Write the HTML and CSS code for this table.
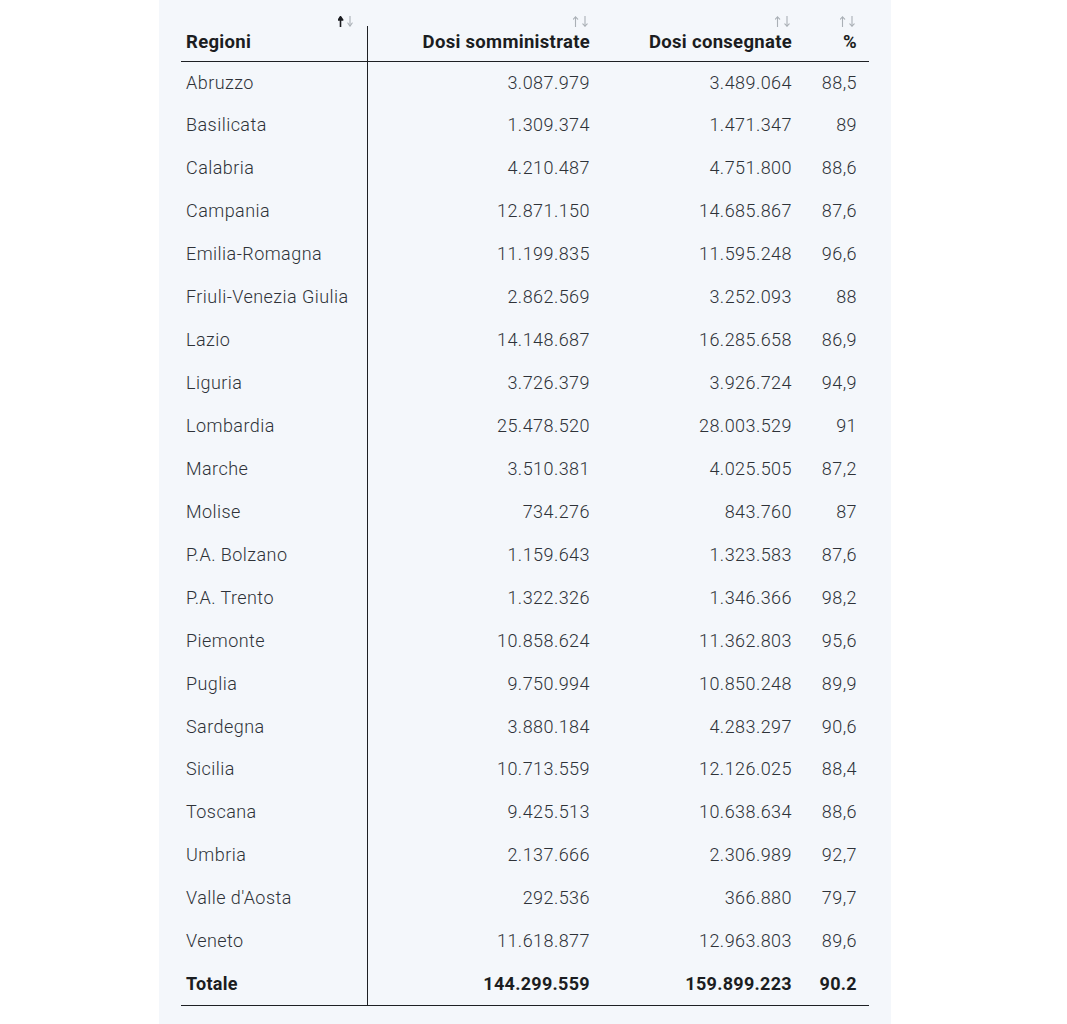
FILE: index.html
```html
<!DOCTYPE html>
<html lang="it">
<head>
<meta charset="utf-8">
<title>Dosi per regione</title>
<link rel="stylesheet" href="styles.css">
</head>
<body>
<div class="panel">
  <table class="doses">
    <thead>
      <tr>
        <th class="col-region"><svg class="sort asc" viewBox="0 0 15 11" width="15" height="11" aria-hidden="true"><g class="up"><path d="M2.5 1.5 V11"/><path class="head" d="M0.3 4 L2.5 0.6 L4.7 4 Z"/></g><g class="down"><path d="M12 0 V9.5"/><path d="M9.8 7 L12 10.2 L14.2 7"/></g></svg>Regioni</th>
        <th class="num col-adm"><svg class="sort" viewBox="0 0 15 11" width="15" height="11" aria-hidden="true"><g class="up"><path d="M2.5 1 V11"/><path d="M0.3 3.2 L2.5 0.8 L4.7 3.2"/></g><g class="down"><path d="M12 0 V10"/><path d="M9.8 7.8 L12 10.2 L14.2 7.8"/></g></svg>Dosi somministrate</th>
        <th class="num col-del"><svg class="sort" viewBox="0 0 15 11" width="15" height="11" aria-hidden="true"><g class="up"><path d="M2.5 1 V11"/><path d="M0.3 3.2 L2.5 0.8 L4.7 3.2"/></g><g class="down"><path d="M12 0 V10"/><path d="M9.8 7.8 L12 10.2 L14.2 7.8"/></g></svg>Dosi consegnate</th>
        <th class="num col-pct"><svg class="sort" viewBox="0 0 15 11" width="15" height="11" aria-hidden="true"><g class="up"><path d="M2.5 1 V11"/><path d="M0.3 3.2 L2.5 0.8 L4.7 3.2"/></g><g class="down"><path d="M12 0 V10"/><path d="M9.8 7.8 L12 10.2 L14.2 7.8"/></g></svg>%</th>
      </tr>
    </thead>
    <tbody>
      <tr><td class="col-region">Abruzzo</td><td class="num">3.087.979</td><td class="num">3.489.064</td><td class="num">88,5</td></tr>
      <tr><td class="col-region">Basilicata</td><td class="num">1.309.374</td><td class="num">1.471.347</td><td class="num">89</td></tr>
      <tr><td class="col-region">Calabria</td><td class="num">4.210.487</td><td class="num">4.751.800</td><td class="num">88,6</td></tr>
      <tr><td class="col-region">Campania</td><td class="num">12.871.150</td><td class="num">14.685.867</td><td class="num">87,6</td></tr>
      <tr><td class="col-region">Emilia-Romagna</td><td class="num">11.199.835</td><td class="num">11.595.248</td><td class="num">96,6</td></tr>
      <tr><td class="col-region">Friuli-Venezia Giulia</td><td class="num">2.862.569</td><td class="num">3.252.093</td><td class="num">88</td></tr>
      <tr><td class="col-region">Lazio</td><td class="num">14.148.687</td><td class="num">16.285.658</td><td class="num">86,9</td></tr>
      <tr><td class="col-region">Liguria</td><td class="num">3.726.379</td><td class="num">3.926.724</td><td class="num">94,9</td></tr>
      <tr><td class="col-region">Lombardia</td><td class="num">25.478.520</td><td class="num">28.003.529</td><td class="num">91</td></tr>
      <tr><td class="col-region">Marche</td><td class="num">3.510.381</td><td class="num">4.025.505</td><td class="num">87,2</td></tr>
      <tr><td class="col-region">Molise</td><td class="num">734.276</td><td class="num">843.760</td><td class="num">87</td></tr>
      <tr><td class="col-region">P.A. Bolzano</td><td class="num">1.159.643</td><td class="num">1.323.583</td><td class="num">87,6</td></tr>
      <tr><td class="col-region">P.A. Trento</td><td class="num">1.322.326</td><td class="num">1.346.366</td><td class="num">98,2</td></tr>
      <tr><td class="col-region">Piemonte</td><td class="num">10.858.624</td><td class="num">11.362.803</td><td class="num">95,6</td></tr>
      <tr><td class="col-region">Puglia</td><td class="num">9.750.994</td><td class="num">10.850.248</td><td class="num">89,9</td></tr>
      <tr><td class="col-region">Sardegna</td><td class="num">3.880.184</td><td class="num">4.283.297</td><td class="num">90,6</td></tr>
      <tr><td class="col-region">Sicilia</td><td class="num">10.713.559</td><td class="num">12.126.025</td><td class="num">88,4</td></tr>
      <tr><td class="col-region">Toscana</td><td class="num">9.425.513</td><td class="num">10.638.634</td><td class="num">88,6</td></tr>
      <tr><td class="col-region">Umbria</td><td class="num">2.137.666</td><td class="num">2.306.989</td><td class="num">92,7</td></tr>
      <tr><td class="col-region">Valle d'Aosta</td><td class="num">292.536</td><td class="num">366.880</td><td class="num">79,7</td></tr>
      <tr><td class="col-region">Veneto</td><td class="num">11.618.877</td><td class="num">12.963.803</td><td class="num">89,6</td></tr>
    </tbody>
    <tfoot>
      <tr class="total"><td class="col-region">Totale</td><td class="num">144.299.559</td><td class="num">159.899.223</td><td class="num">90.2</td></tr>
    </tfoot>
  </table>
</div>
</body>
</html>
```

FILE: styles.css
```css
html, body {
  margin: 0;
  padding: 0;
  background: #ffffff;
}

body {
  font-family: Roboto, "Liberation Sans", sans-serif;
  color: #2e3238;
}

.panel {
  margin-left: 159px;
  width: 732px;
  min-height: 1024px;
  background: #f4f7fb;
  padding: 26px 22px 0;
  box-sizing: border-box;
}

.doses {
  width: 688px;
  border-collapse: collapse;
  table-layout: fixed;
  font-size: 18px;
  font-weight: 300;
  letter-spacing: 0.45px;
  border-bottom: 1px solid #1e2024;
}

.doses th {
  position: relative;
  height: 35px;
  box-sizing: border-box;
  padding: 0 12px 9px 5px;
  vertical-align: bottom;
  text-align: left;
  font-size: 18.5px;
  font-weight: 700;
  letter-spacing: 0.3px;
  color: #1b1d21;
  line-height: 20px;
  border-bottom: 1px solid #1e2024;
  white-space: nowrap;
}

.doses th.num {
  text-align: right;
}

.doses .col-region {
  width: 186px;
  border-right: 1px solid #1e2024;
  box-sizing: border-box;
}

.doses .col-adm { width: 235px; }
.doses .col-del { width: 202px; }
.doses .col-pct { width: 65px; }

.sort {
  position: absolute;
  top: -10px;
  right: 14px;
  display: block;
  fill: none;
  stroke: #aab0b6;
  stroke-width: 1.1;
  stroke-linecap: round;
  stroke-linejoin: round;
}

.sort.asc .up {
  stroke: #1b1d21;
  stroke-width: 1.6;
}

.sort.asc .up .head {
  fill: #1b1d21;
}

.doses td {
  height: 42.95px;
  box-sizing: border-box;
  padding: 0 12px 0 5px;
  line-height: 22px;
  vertical-align: middle;
  white-space: nowrap;
}

.doses td.num {
  text-align: right;
}

.doses .total td {
  font-weight: 700;
  letter-spacing: 0.3px;
  color: #1b1d21;
}
```
